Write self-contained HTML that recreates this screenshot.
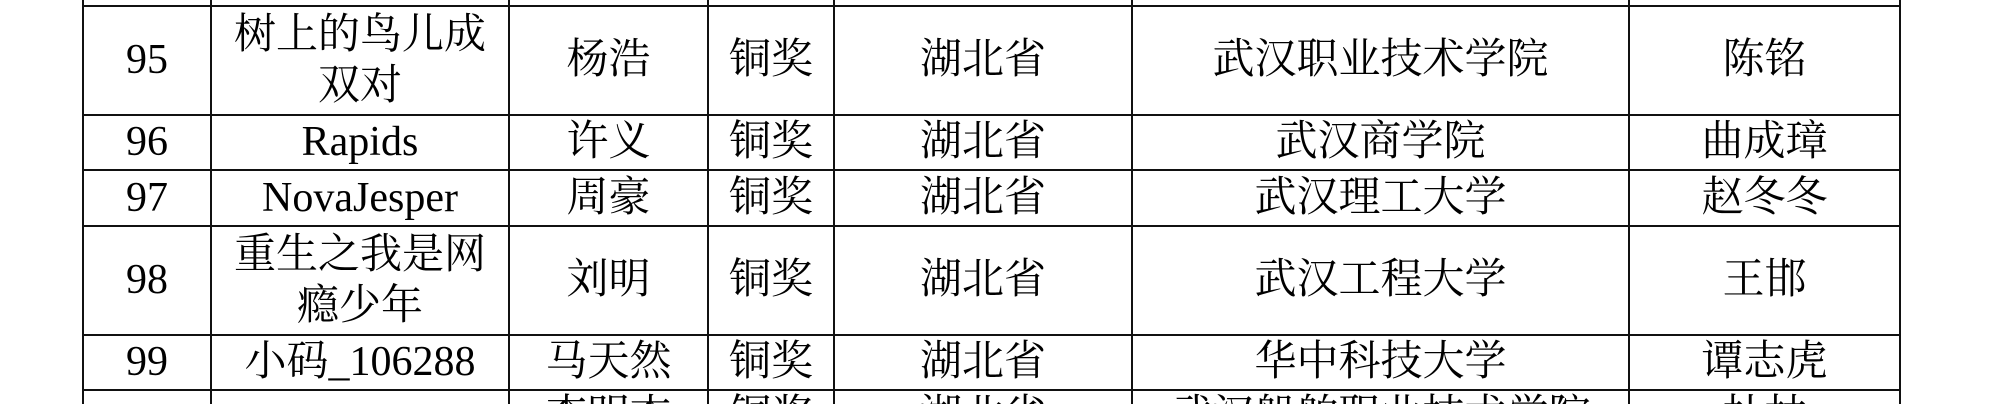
<!DOCTYPE html>
<html style="overflow:hidden;height:404px;width:1998px"><head><meta charset="utf-8"><style>
body{margin:0;width:1998px;height:404px;background:#fff;overflow:hidden;position:relative;font-family:"Liberation Serif","Noto Serif CJK SC",serif;color:#000}
.h{position:absolute;left:82px;width:1819px;height:2px;background:#111}
.v{position:absolute;top:0;height:404px;width:2px;background:#111}
.c{position:absolute;display:flex;align-items:center;justify-content:center;text-align:center;font-size:42px;line-height:51px;white-space:nowrap}
.p{align-items:flex-start;overflow:hidden}
</style></head><body>
<div class="h" style="top:5px"></div>
<div class="h" style="top:114px"></div>
<div class="h" style="top:169px"></div>
<div class="h" style="top:225px"></div>
<div class="h" style="top:334px"></div>
<div class="h" style="top:389px"></div>
<div class="v" style="left:82px"></div>
<div class="v" style="left:210px"></div>
<div class="v" style="left:508px"></div>
<div class="v" style="left:707px"></div>
<div class="v" style="left:833px"></div>
<div class="v" style="left:1131px"></div>
<div class="v" style="left:1628px"></div>
<div class="v" style="left:1899px"></div>

<div class="c" style="left:84px;width:126px;top:7px;height:107px">95</div>
<div class="c" style="left:212px;width:296px;top:7px;height:107px">树上的鸟儿成<br>双对</div>
<div class="c" style="left:510px;width:197px;top:7px;height:107px">杨浩</div>
<div class="c" style="left:709px;width:124px;top:7px;height:107px">铜奖</div>
<div class="c" style="left:835px;width:296px;top:7px;height:107px">湖北省</div>
<div class="c" style="left:1133px;width:495px;top:7px;height:107px">武汉职业技术学院</div>
<div class="c" style="left:1630px;width:269px;top:7px;height:107px">陈铭</div>

<div class="c" style="left:84px;width:126px;top:116px;height:53px">96</div>
<div class="c" style="left:212px;width:296px;top:116px;height:53px">Rapids</div>
<div class="c" style="left:510px;width:197px;top:116px;height:53px">许义</div>
<div class="c" style="left:709px;width:124px;top:116px;height:53px">铜奖</div>
<div class="c" style="left:835px;width:296px;top:116px;height:53px">湖北省</div>
<div class="c" style="left:1133px;width:495px;top:116px;height:53px">武汉商学院</div>
<div class="c" style="left:1630px;width:269px;top:116px;height:53px">曲成璋</div>

<div class="c" style="left:84px;width:126px;top:171px;height:54px">97</div>
<div class="c" style="left:212px;width:296px;top:171px;height:54px">NovaJesper</div>
<div class="c" style="left:510px;width:197px;top:171px;height:54px">周豪</div>
<div class="c" style="left:709px;width:124px;top:171px;height:54px">铜奖</div>
<div class="c" style="left:835px;width:296px;top:171px;height:54px">湖北省</div>
<div class="c" style="left:1133px;width:495px;top:171px;height:54px">武汉理工大学</div>
<div class="c" style="left:1630px;width:269px;top:171px;height:54px">赵冬冬</div>

<div class="c" style="left:84px;width:126px;top:227px;height:107px">98</div>
<div class="c" style="left:212px;width:296px;top:227px;height:107px">重生之我是网<br>瘾少年</div>
<div class="c" style="left:510px;width:197px;top:227px;height:107px">刘明</div>
<div class="c" style="left:709px;width:124px;top:227px;height:107px">铜奖</div>
<div class="c" style="left:835px;width:296px;top:227px;height:107px">湖北省</div>
<div class="c" style="left:1133px;width:495px;top:227px;height:107px">武汉工程大学</div>
<div class="c" style="left:1630px;width:269px;top:227px;height:107px">王邯</div>

<div class="c" style="left:84px;width:126px;top:336px;height:53px">99</div>
<div class="c" style="left:212px;width:296px;top:336px;height:53px">小码_106288</div>
<div class="c" style="left:510px;width:197px;top:336px;height:53px">马天然</div>
<div class="c" style="left:709px;width:124px;top:336px;height:53px">铜奖</div>
<div class="c" style="left:835px;width:296px;top:336px;height:53px">湖北省</div>
<div class="c" style="left:1133px;width:495px;top:336px;height:53px">华中科技大学</div>
<div class="c" style="left:1630px;width:269px;top:336px;height:53px">谭志虎</div>

<div class="c p" style="left:510px;width:197px;top:391px;height:13px">李明杰</div>
<div class="c p" style="left:709px;width:124px;top:391px;height:13px">铜奖</div>
<div class="c p" style="left:835px;width:296px;top:391px;height:13px">湖北省</div>
<div class="c p" style="left:1133px;width:495px;top:391px;height:13px">武汉船舶职业技术学院</div>
<div class="c p" style="left:1630px;width:269px;top:391px;height:13px">杜林</div>
</body></html>
